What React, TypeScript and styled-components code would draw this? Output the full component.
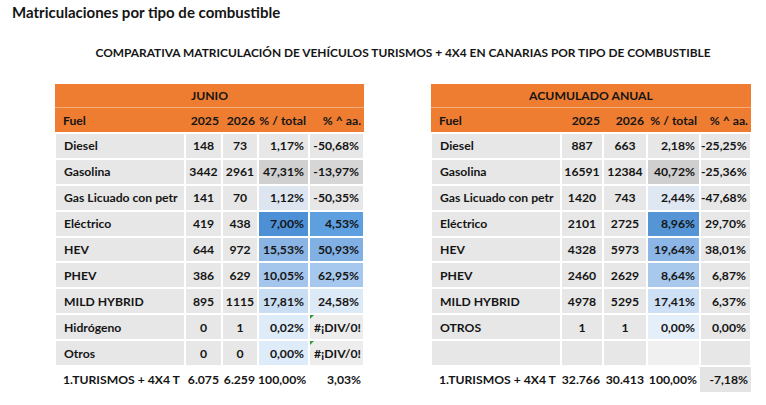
import styled, { createGlobalStyle, css } from "styled-components";

const GlobalStyle = createGlobalStyle`
  body {
    margin: 0;
    background: #fff;
    color: #151515;
    font-family: Lato, "Liberation Sans", Arial, sans-serif;
  }
`;

type Row = {
  fuel: string;
  a: string;
  b: string;
  pct: string;
  yoy: string;
  pctBg?: string;
  yoyBg?: string;
  flag?: boolean;
};

type TableData = {
  title: string;
  widths: number[];
  rows: Row[];
  total: string[];
  totalBg?: string;
};

const GREY = "#e7e7e7";

const junio: TableData = {
  title: "JUNIO",
  widths: [130, 37, 36, 51, 55],
  rows: [
    { fuel: "Diesel", a: "148", b: "73", pct: "1,17%", yoy: "-50,68%" },
    { fuel: "Gasolina", a: "3442", b: "2961", pct: "47,31%", yoy: "-13,97%", pctBg: "#d0d0d0", yoyBg: "#d6d6d6" },
    { fuel: "Gas Licuado con petr", a: "141", b: "70", pct: "1,12%", yoy: "-50,35%", pctBg: "#dde6f0" },
    { fuel: "Eléctrico", a: "419", b: "438", pct: "7,00%", yoy: "4,53%", pctBg: "#4e90d6", yoyBg: "#5e9fe0" },
    { fuel: "HEV", a: "644", b: "972", pct: "15,53%", yoy: "50,93%", pctBg: "#8ab4e4", yoyBg: "#80b0e4" },
    { fuel: "PHEV", a: "386", b: "629", pct: "10,05%", yoy: "62,95%", pctBg: "#a5c6ec", yoyBg: "#a6c8ee" },
    { fuel: "MILD HYBRID", a: "895", b: "1115", pct: "17,81%", yoy: "24,58%", pctBg: "#c9ddf3", yoyBg: "#dce9f7" },
    { fuel: "Hidrógeno", a: "0", b: "1", pct: "0,02%", yoy: "#¡DIV/0!", pctBg: "#deebf8", yoyBg: "#ededed", flag: true },
    { fuel: "Otros", a: "0", b: "0", pct: "0,00%", yoy: "#¡DIV/0!", pctBg: "#deebf8", yoyBg: "#ededed", flag: true },
  ],
  total: ["1.TURISMOS + 4X4 T", "6.075", "6.259", "100,00%", "3,03%"],
};

const anual: TableData = {
  title: "ACUMULADO ANUAL",
  widths: [130, 42, 44, 53, 51],
  rows: [
    { fuel: "Diesel", a: "887", b: "663", pct: "2,18%", yoy: "-25,25%" },
    { fuel: "Gasolina", a: "16591", b: "12384", pct: "40,72%", yoy: "-25,36%", pctBg: "#cfcfcf" },
    { fuel: "Gas Licuado con petr", a: "1420", b: "743", pct: "2,44%", yoy: "-47,68%", pctBg: "#dfe8f2" },
    { fuel: "Eléctrico", a: "2101", b: "2725", pct: "8,96%", yoy: "29,70%", pctBg: "#5595d6" },
    { fuel: "HEV", a: "4328", b: "5973", pct: "19,64%", yoy: "38,01%", pctBg: "#8cb6e6" },
    { fuel: "PHEV", a: "2460", b: "2629", pct: "8,64%", yoy: "6,87%", pctBg: "#a8c8ec" },
    { fuel: "MILD HYBRID", a: "4978", b: "5295", pct: "17,41%", yoy: "6,37%", pctBg: "#cde0f5" },
    { fuel: "OTROS", a: "1", b: "1", pct: "0,00%", yoy: "0,00%", pctBg: "#e4eff9" },
    { fuel: "", a: "", b: "", pct: "", yoy: "", pctBg: "#f0f0f0" },
  ],
  total: ["1.TURISMOS + 4X4 T", "32.766", "30.413", "100,00%", "-7,18%"],
  totalBg: "#e4e4e4",
};

export default function App() {
  return (
    <>
      <GlobalStyle />
      <Title>Matriculaciones por tipo de combustible</Title>
      <Content>
        <Subtitle>
          COMPARATIVA MATRICULACIÓN DE VEHÍCULOS TURISMOS + 4X4 EN CANARIAS POR TIPO DE COMBUSTIBLE
        </Subtitle>
        <Tables>
          <FuelTable data={junio} />
          <FuelTable data={anual} />
        </Tables>
      </Content>
    </>
  );
}

function FuelTable({ data }: { data: TableData }) {
  const width = data.widths.reduce((s, w) => s + w, 0);
  return (
    <Table style={{ width }}>
      <colgroup>
        {data.widths.map((w, i) => (
          <col key={i} style={{ width: w }} />
        ))}
      </colgroup>
      <thead>
        <tr>
          <Caption colSpan={5}>{data.title}</Caption>
        </tr>
        <tr>
          <Head align="left">Fuel</Head>
          <Head>2025</Head>
          <Head>2026</Head>
          <Head>% / total</Head>
          <Head>% ^ aa.</Head>
        </tr>
      </thead>
      <tbody>
        {data.rows.map((r, i) => (
          <tr key={i}>
            <Cell align="left">{r.fuel}</Cell>
            <Cell align="center">{r.a}</Cell>
            <Cell align="center">{r.b}</Cell>
            <Cell $bg={r.pctBg}>{r.pct}</Cell>
            <Cell $bg={r.yoyBg} $flag={r.flag}>
              {r.yoy}
            </Cell>
          </tr>
        ))}
        <tr>
          {data.total.map((t, i) => (
            <TotalCell key={i} align={i === 0 ? "left" : "right"} $bg={i === 4 ? data.totalBg : undefined}>
              {t}
            </TotalCell>
          ))}
        </tr>
      </tbody>
    </Table>
  );
}

const Title = styled.div`
  padding: 3px 0 0 12px;
  font-size: 15px;
  font-weight: 700;
  line-height: 19px;
`;

const Content = styled.div`
  width: 698px;
  padding-left: 54px;
`;

const Subtitle = styled.div`
  margin-top: 23px;
  text-align: center;
  font-size: 11.9px;
  font-weight: 700;
  line-height: 15px;
  white-space: nowrap;
`;

const Tables = styled.div`
  margin-top: 24px;
  display: flex;
  justify-content: space-between;
`;

const Table = styled.table`
  border-collapse: collapse;
  table-layout: fixed;
  font-size: 12.2px;
  font-weight: 700;
`;

const Caption = styled.th`
  height: 23px;
  padding: 0;
  background: #ee7d31;
  text-align: center;
  border-bottom: 1px solid #f6ad7b;
`;

const Head = styled.th`
  height: 24px;
  padding: 0 3px 0 0;
  white-space: nowrap;
  background: #ee7d31;
  text-align: right;
  &[align="left"] {
    text-align: left;
    padding-left: 8px;
  }
`;

const Cell = styled.td<{ $bg?: string; $flag?: boolean }>`
  position: relative;
  height: 23.9px;
  padding: 0 4px 0 0;
  white-space: nowrap;
  text-align: right;
  background: ${(p) => p.$bg ?? GREY};
  border: 2px solid #fff;
  &[align="left"] {
    text-align: left;
    padding-left: 8px;
    overflow: hidden;
  }
  &[align="center"] {
    text-align: center;
    padding: 0;
  }
  ${(p) =>
    p.$flag &&
    css`
      padding-right: 2px;
      &::before {
        content: "";
        position: absolute;
        top: 0;
        left: 0;
        border-top: 4px solid #2f9b3c;
        border-right: 4px solid transparent;
      }
    `}
`;

const TotalCell = styled.td<{ $bg?: string }>`
  height: 25px;
  padding: 0 3px 0 0;
  white-space: nowrap;
  text-align: right;
  background: ${(p) => p.$bg ?? "transparent"};
  &[align="left"] {
    text-align: left;
    padding-left: 8px;
  }
`;
